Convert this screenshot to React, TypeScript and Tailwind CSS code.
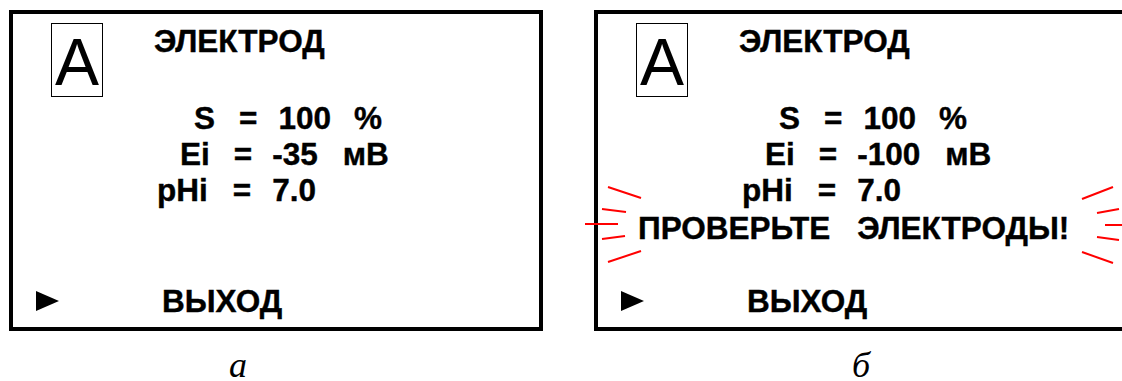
const SANS = "font-['Liberation_Sans',Arial,sans-serif]";

function Arrow() {
  return (
    <svg width="23" height="20" viewBox="0 0 23 20" className="shrink-0">
      <polygon points="0,0 23,10 0,20" fill="#000" />
    </svg>
  );
}

function Screen({ ei, warn }: { ei: string; warn?: boolean }) {
  return (
    <div className={`w-[534px] h-[321px] shrink-0 border-4 border-black flex flex-col pb-[8px] text-black ${SANS}`}>
      <div className="mt-[9px] flex items-start">
        <div className="ml-[38px] w-[52px] h-[74px] border-[1.5px] border-black flex items-center justify-center pt-[4px] text-[66px] leading-none font-normal">
          A
        </div>
        <div className="ml-[51px] text-[31.5px] leading-[36px] font-bold [-webkit-text-stroke:0.4px_black]">ЭЛЕКТРОД</div>
      </div>

      <div className="mt-[3px] text-[31.5px] leading-[36px] font-bold [-webkit-text-stroke:0.4px_black]">
        <div className="flex pl-[181px] whitespace-pre">
          <span>S</span>
          <span className="ml-[24px]">=</span>
          <span className="ml-[21px]">100</span>
          <span className="ml-[23px]">%</span>
        </div>
        <div className="flex pl-[167px] whitespace-pre">
          <span>Ei</span>
          <span className="ml-[24px]">=</span>
          <span className="ml-[20px]">{ei}</span>
          <span className="ml-[25px]">мВ</span>
        </div>
        <div className="flex pl-[144px] whitespace-pre">
          <span>pHi</span>
          <span className="ml-[25px]">=</span>
          <span className="ml-[21px]">7.0</span>
        </div>
        {warn && (
          <div className="mt-[2px] flex pl-[40px] whitespace-pre">
            <span>ПРОВЕРЬТЕ</span>
            <span className="ml-[27px]">ЭЛЕКТРОДЫ!</span>
          </div>
        )}
      </div>

      <div className="mt-auto flex items-center pl-[23px]">
        <Arrow />
        <span className="ml-[103px] text-[31.5px] leading-[36px] font-bold [-webkit-text-stroke:0.4px_black]">ВЫХОД</span>
      </div>
    </div>
  );
}

function Rays() {
  const lines: [number, number, number, number][] = [
    [608, 187, 641, 198],
    [602, 209, 626, 212],
    [585, 224, 618, 224],
    [602, 239, 625, 236],
    [608, 262, 641, 251],
    [1082, 199, 1113, 187],
    [1097, 213, 1119, 209],
    [1105, 225, 1124, 225],
    [1097, 237, 1119, 240],
    [1082, 252, 1113, 263],
  ];
  return (
    <svg className="absolute inset-0 pointer-events-none" width="1122" height="381" viewBox="0 0 1122 381">
      {lines.map(([x1, y1, x2, y2], i) => (
        <line key={i} x1={x1} y1={y1} x2={x2} y2={y2} stroke="#ff0000" strokeWidth="2" />
      ))}
    </svg>
  );
}

export default function App() {
  return (
    <div className="relative w-[1122px] h-[381px] overflow-hidden bg-white">
      <div className="flex gap-[51px] pl-[9px] pt-[10px]">
        <div className="flex flex-col shrink-0">
          <Screen ei="-35" />
          <div className="mt-[20px] pl-[220px] text-[36px] leading-[28px] italic font-['Liberation_Serif','Times_New_Roman',serif]">а</div>
        </div>
        <div className="flex flex-col shrink-0">
          <Screen ei="-100" warn />
          <div className="mt-[20px] pl-[258px] text-[36px] leading-[28px] italic font-['Liberation_Serif','Times_New_Roman',serif]">б</div>
        </div>
      </div>
      <Rays />
    </div>
  );
}
